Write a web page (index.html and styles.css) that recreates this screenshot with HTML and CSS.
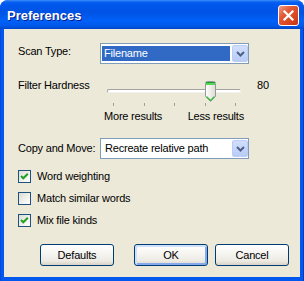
FILE: index.html
```html
<!DOCTYPE html>
<html lang="en">
<head>
    <meta charset="UTF-8">
    <title>Preferences</title>
    <link rel="stylesheet" href="styles.css">
</head>
<body>
    <div class="window">
        <div class="titlebar">
            <span class="title">Preferences</span>
            <span class="close">
                <svg width="19" height="19" viewBox="0 0 19 19">
                    <path d="M5.5 5.5 L13.5 13.5 M13.5 5.5 L5.5 13.5" stroke="#fff" stroke-width="2.2" stroke-linecap="square"/>
                </svg>
            </span>
        </div>
        <div class="client">
            <div class="row row-scan">
                <span class="label">Scan Type:</span>
                <div class="combo">
                    <span class="value selected">Filename</span>
                    <span class="drop">
                        <svg width="9" height="6" viewBox="0 0 9 6"><path d="M1 1 L4.5 4.5 L8 1" fill="none" stroke="#4D6185" stroke-width="2"/></svg>
                    </span>
                </div>
            </div>

            <div class="row row-hardness">
                <span class="label">Filter Hardness</span>
                <div class="slider">
                    <div class="track"></div>
                    <svg class="thumb" width="11" height="22" viewBox="0 0 11 22">
                        <defs>
                            <linearGradient id="thumbFill" x1="0" x2="1" y1="0" y2="0">
                                <stop offset="0" stop-color="#FFFFFF"/>
                                <stop offset="1" stop-color="#DEDBD0"/>
                            </linearGradient>
                        </defs>
                        <path d="M0.5 2.5 Q0.5 0.5 2.5 0.5 H8.5 Q10.5 0.5 10.5 2.5 V15.5 L5.5 20.5 L0.5 15.5 Z" fill="url(#thumbFill)" stroke="#8F99A6"/>
                        <rect x="1" y="1" width="9" height="1" fill="#1F9F1F"/>
                        <rect x="1" y="2" width="9" height="2" fill="#55D455"/>
                        <path d="M1.5 15.5 L5.5 19.5 L9.5 15.5" fill="none" stroke="#3DBE3D" stroke-width="1.2"/>
                    </svg>
                    <div class="ticks"><i></i><i></i><i></i><i></i><i></i></div>
                    <div class="scale">
                        <span>More results</span>
                        <span>Less results</span>
                    </div>
                </div>
                <span class="amount">80</span>
            </div>

            <div class="row row-copy">
                <span class="label">Copy and Move:</span>
                <div class="combo">
                    <span class="value">Recreate relative path</span>
                    <span class="drop">
                        <svg width="9" height="6" viewBox="0 0 9 6"><path d="M1 1 L4.5 4.5 L8 1" fill="none" stroke="#4D6185" stroke-width="2"/></svg>
                    </span>
                </div>
            </div>

            <div class="checks">
                <div class="check">
                    <span class="box">
                        <svg width="11" height="11" viewBox="0 0 11 11"><path d="M2 5 L4.3 7.3 L8.8 2.8" fill="none" stroke="#21A121" stroke-width="2"/></svg>
                    </span>
                    <span>Word weighting</span>
                </div>
                <div class="check">
                    <span class="box"></span>
                    <span>Match similar words</span>
                </div>
                <div class="check">
                    <span class="box">
                        <svg width="11" height="11" viewBox="0 0 11 11"><path d="M2 5 L4.3 7.3 L8.8 2.8" fill="none" stroke="#21A121" stroke-width="2"/></svg>
                    </span>
                    <span>Mix file kinds</span>
                </div>
            </div>

            <div class="buttons">
                <button class="btn">Defaults</button>
                <button class="btn btn-default">OK</button>
                <button class="btn btn-cancel">Cancel</button>
            </div>
        </div>
    </div>
</body>
</html>
```

FILE: styles.css
```css
html, body {
    margin: 0;
    background: #fff;
}
body {
    font-family: "Liberation Sans", Arial, sans-serif;
    font-size: 11px;
    line-height: 13px;
    letter-spacing: -0.2px;
    color: #000;
}
.window {
    width: 304px;
    height: 281px;
    display: flex;
    flex-direction: column;
    background: linear-gradient(to right, #0838C8 0, #0058EE 1px, #0058EE 303px, #0838C8 303px);
    border-radius: 8px 8px 0 0;
    overflow: hidden;
}
.titlebar {
    height: 29px;
    flex: none;
    display: flex;
    align-items: flex-start;
    justify-content: space-between;
    padding: 0 5px 0 7px;
    background: linear-gradient(#3C8FFA 0, #0A62F0 2px, #0058EE 4px, #0053E3 12px, #0060F8 21px, #0058EA 26px, #0045C4 29px);
}
.title {
    margin-top: 8px;
    color: #fff;
    font-weight: bold;
    font-size: 13px;
    line-height: 16px;
    letter-spacing: 0;
    text-shadow: 1px 1px 0 #0A1C8C;
}
.close {
    margin-top: 5px;
    width: 21px;
    height: 21px;
    box-sizing: border-box;
    border: 1px solid #fff;
    border-radius: 3px;
    background: linear-gradient(135deg, #F29C84 0, #E2593A 35%, #D8461F 70%, #C0361A 100%);
    display: flex;
    align-items: center;
    justify-content: center;
}
.close svg {
    display: block;
}
.client {
    flex: 1;
    margin: 0 4px 4px;
    background: #ECE9D8;
    padding: 14px 11px 0 14px;
    display: flex;
    flex-direction: column;
}
.row {
    display: flex;
}
.label {
    width: 82px;
    flex: none;
}
.row-scan .label {
    padding-top: 2px;
}
.combo {
    width: 149px;
    height: 21px;
    box-sizing: border-box;
    border: 1px solid #7F9DB9;
    background: #fff;
    display: flex;
    align-items: stretch;
    padding: 1px 0 1px 0;
}
.combo .value {
    flex: 1;
    padding: 2px 0 0 4px;
    white-space: nowrap;
}
.combo .value.selected {
    margin: 1px 2px 1px 1px;
    padding: 1px 0 0 2px;
    background: #316AC5;
    color: #fff;
}
.drop {
    width: 16px;
    box-sizing: border-box;
    border: 1px solid #BACDF6;
    border-radius: 2px;
    background: linear-gradient(#D2DFFD, #B8CCF7);
    display: flex;
    align-items: center;
    justify-content: center;
}
.drop svg {
    display: block;
}
.row-hardness {
    margin-top: 15px;
}
.slider {
    position: relative;
    width: 140px;
    margin: 2px 0 0 4px;
}
.track {
    height: 4px;
    margin: 8px 3px 0;
    box-sizing: border-box;
    border: 1px solid;
    border-color: #A3A29C #F3F2EC #F3F2EC #A3A29C;
    border-radius: 2px;
    background: #fff;
}
.thumb {
    position: absolute;
    left: 101px;
    top: 0;
}
.ticks {
    display: flex;
    justify-content: space-between;
    margin: 10px 8px 0 9px;
}
.ticks i {
    width: 1px;
    height: 3px;
    background: #A19F95;
}
.scale {
    display: flex;
    justify-content: space-between;
    margin-top: 4px;
}
.amount {
    margin-left: 13px;
}
.row-copy {
    margin-top: 15px;
    align-items: center;
}
.checks {
    display: flex;
    flex-direction: column;
    gap: 9px;
    margin-top: 11px;
}
.check {
    display: flex;
    align-items: center;
    gap: 6px;
    height: 13px;
}
.box {
    width: 13px;
    height: 13px;
    box-sizing: border-box;
    border: 1px solid #1C5180;
    background: linear-gradient(135deg, #DCDCD4 0, #F2F2EE 60%, #FFFFFF 100%);
}
.box svg {
    display: block;
}
.buttons {
    display: flex;
    margin-top: 17px;
    padding-left: 22px;
}
.btn {
    width: 74px;
    height: 22px;
    padding: 0;
    box-sizing: border-box;
    border: 1px solid #003C74;
    border-radius: 3px;
    background: linear-gradient(#FFFFFF 0, #F4F3EE 50%, #ECEAE2 80%, #D8D2C6 100%);
    font-family: inherit;
    font-size: 11px;
    letter-spacing: inherit;
    color: #000;
}
.btn-default {
    margin-left: 20px;
    box-shadow: inset 1px 1px 0 1px #CEE0FC, inset -1px -1px 0 1px #86A8EC;
}
.btn-cancel {
    margin-left: 7px;
}
```
